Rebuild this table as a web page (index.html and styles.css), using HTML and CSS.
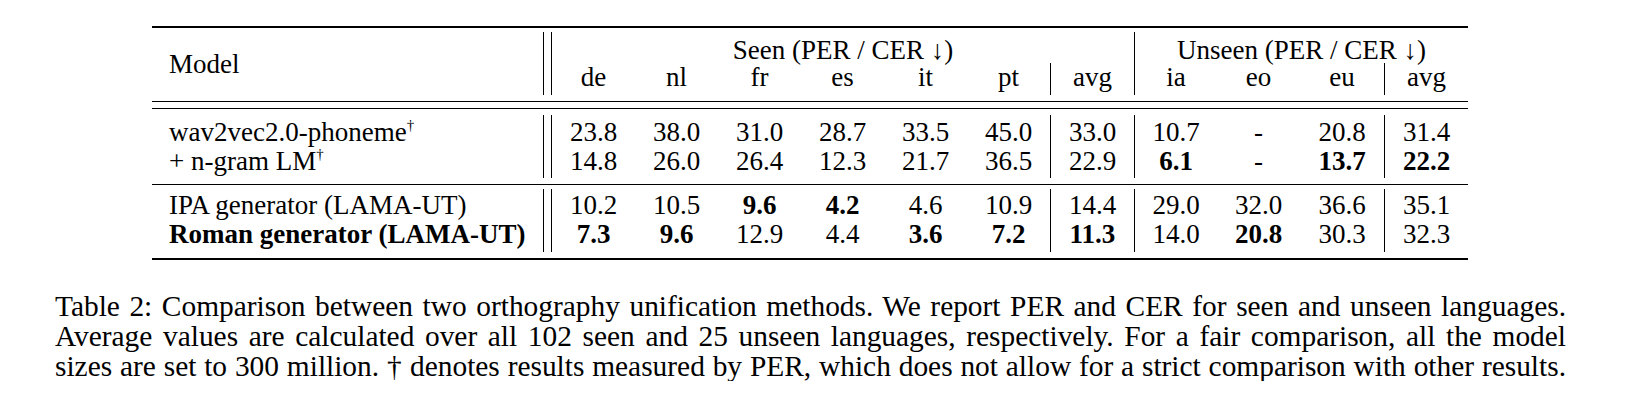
FILE: index.html
```html
<!DOCTYPE html>
<html>
<head>
<meta charset="utf-8">
<link rel="stylesheet" href="styles.css">
</head>
<body>
<div class="page">
  <div class="tbl">
    <div class="rule thick"></div>
    <div class="block head">
      <div class="model-h">Model</div>
      <div class="dbl"></div>
      <div class="c r1 seen">Seen (PER / CER ↓)</div>
      <div class="c r1 unseen bl">Unseen (PER / CER ↓)</div>
      <div class="c r2">de</div>
      <div class="c r2">nl</div>
      <div class="c r2">fr</div>
      <div class="c r2">es</div>
      <div class="c r2">it</div>
      <div class="c r2">pt</div>
      <div class="c r2 bl">avg</div>
      <div class="c r2 bl">ia</div>
      <div class="c r2">eo</div>
      <div class="c r2">eu</div>
      <div class="c r2 bl">avg</div>
    </div>
    <div class="rule double"></div>
    <div class="block">
      <div class="m r1">wav2vec2.0-phoneme<sup>†</sup></div>
      <div class="dbl"></div>
      <div class="c r1">23.8</div>
      <div class="c r1">38.0</div>
      <div class="c r1">31.0</div>
      <div class="c r1">28.7</div>
      <div class="c r1">33.5</div>
      <div class="c r1">45.0</div>
      <div class="c r1 bl">33.0</div>
      <div class="c r1 bl">10.7</div>
      <div class="c r1">-</div>
      <div class="c r1">20.8</div>
      <div class="c r1 bl">31.4</div>
      <div class="m r2">+ n-gram LM<sup>†</sup></div>
      <div class="c r2">14.8</div>
      <div class="c r2">26.0</div>
      <div class="c r2">26.4</div>
      <div class="c r2">12.3</div>
      <div class="c r2">21.7</div>
      <div class="c r2">36.5</div>
      <div class="c r2 bl">22.9</div>
      <div class="c r2 bl b">6.1</div>
      <div class="c r2">-</div>
      <div class="c r2 b">13.7</div>
      <div class="c r2 bl b">22.2</div>
    </div>
    <div class="rule thin"></div>
    <div class="block second">
      <div class="m r1">IPA generator (LAMA-UT)</div>
      <div class="dbl"></div>
      <div class="c r1">10.2</div>
      <div class="c r1">10.5</div>
      <div class="c r1 b">9.6</div>
      <div class="c r1 b">4.2</div>
      <div class="c r1">4.6</div>
      <div class="c r1">10.9</div>
      <div class="c r1 bl">14.4</div>
      <div class="c r1 bl">29.0</div>
      <div class="c r1">32.0</div>
      <div class="c r1">36.6</div>
      <div class="c r1 bl">35.1</div>
      <div class="m r2 b">Roman generator (LAMA-UT)</div>
      <div class="c r2 b">7.3</div>
      <div class="c r2 b">9.6</div>
      <div class="c r2">12.9</div>
      <div class="c r2">4.4</div>
      <div class="c r2 b">3.6</div>
      <div class="c r2 b">7.2</div>
      <div class="c r2 bl b">11.3</div>
      <div class="c r2 bl">14.0</div>
      <div class="c r2 b">20.8</div>
      <div class="c r2">30.3</div>
      <div class="c r2 bl">32.3</div>
    </div>
    <div class="rule thick"></div>
  </div>
  <p class="caption">
    <span class="ln">Table 2: Comparison between two orthography unification methods. We report PER and CER for seen and unseen languages.</span>
    <span class="ln">Average values are calculated over all 102 seen and 25 unseen languages, respectively. For a fair comparison, all the model</span>
    <span class="ln">sizes are set to 300 million. † denotes results measured by PER, which does not allow for a strict comparison with other results.</span>
  </p>
</div>
</body>
</html>
```

FILE: styles.css
```css
html, body {
  margin: 0;
  padding: 0;
  background: #fff;
}

body {
  color: #000;
  font-family: "Liberation Serif", Tinos, "Times New Roman", Times, "DejaVu Serif", serif;
}

.page {
  padding-top: 26px;
}

.tbl {
  margin-left: 152px;
  width: 1316px;
  font-size: 27px;
  line-height: 29px;
}

.rule.thick {
  height: 2px;
  background: #000;
}

.rule.thin {
  height: 1px;
  background: #000;
}

.rule.double {
  height: 8px;
  box-sizing: border-box;
  border-top: 1px solid #000;
  border-bottom: 1px solid #000;
}

.block {
  display: grid;
  grid-template-columns: 391px 9px repeat(6, 83px) 84px 83px 83px 84px 84px;
  padding: 6px 0 6px 0;
}

.block.head {
  padding: 4px 0 6px 0;
}

.block.second {
  padding: 4px 0 6px 0;
}

.dbl {
  grid-column: 2;
  grid-row: 1 / span 2;
  box-sizing: border-box;
  border-left: 1px solid #000;
  border-right: 1px solid #000;
}

.model-h {
  grid-column: 1;
  grid-row: 1 / span 2;
  display: flex;
  align-items: center;
  padding-left: 17px;
  padding-top: 1px;
}

.m {
  grid-column: 1;
  padding-left: 17px;
  white-space: nowrap;
}

.c {
  text-align: center;
  white-space: nowrap;
}

.r1 {
  padding-top: 3px;
}

.r2 {
  padding-bottom: 2px;
}

.head .r1 {
  padding-top: 4px;
  padding-bottom: 0;
}

.head .r2 {
  margin-top: -2px;
  padding-bottom: 3px;
}

.second .r1 {
  padding-top: 2px;
}

.second .r2 {
  padding-bottom: 3px;
}

.bl {
  border-left: 1px solid #000;
}

.seen {
  grid-column: 3 / span 7;
}

.unseen {
  grid-column: 10 / span 4;
}

.b {
  font-weight: bold;
}

sup {
  font-size: 15px;
  line-height: 0;
  vertical-align: 11px;
}

.caption {
  margin: 31px 0 0 55px;
  width: 1511px;
  font-size: 29.4px;
  line-height: 30px;
}

.ln {
  display: block;
  white-space: nowrap;
  text-align: justify;
  text-align-last: justify;
}
```
